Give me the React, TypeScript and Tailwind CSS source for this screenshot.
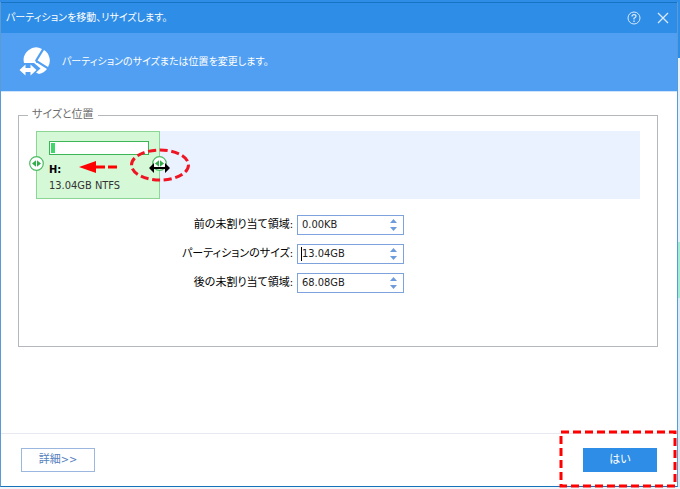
import { useState } from "react";

const rows = [
  { id: "before", label: "前の未割り当て領域:", value: "0.00KB", caret: false },
  { id: "size", label: "パーティションのサイズ:", value: "13.04GB", caret: true },
  { id: "after", label: "後の未割り当て領域:", value: "68.08GB", caret: false },
];

function PartitionIcon() {
  return (
    <svg width="31" height="30" viewBox="0 0 31 30" fill="#fff" aria-hidden="true">
      <path d="M5 16A12.500 12.500 0 0 1 23 2L16 13.500L17.500 16Z" />
      <path d="M25 3A12.500 12.500 0 0 1 29 20L18.500 13.500Z" />
      <path d="M15 16L18.500 16L28 22Q25 26 20 27L17 25.500L21.500 21.500Z" />
      <path d="M0.500 23L6.500 17.500V21H11.500V17.500L17.500 23L11.500 28.500V25H6.500V28.500Z" />
    </svg>
  );
}

function Handle() {
  return (
    <svg width="15" height="15" viewBox="0 0 15 15" aria-hidden="true">
      <circle cx="7.500" cy="7.500" r="6.800" fill="#fff" stroke="#4dbb64" strokeWidth="1.200" />
      <path d="M7 4.300V10.700L3 7.500ZM8 4.300V10.700L12 7.500Z" fill="#2fae49" />
    </svg>
  );
}

function SpinField({ id, label, value, caret }: (typeof rows)[number]) {
  const [text, setText] = useState(value);
  return (
    <>
      <label htmlFor={id} className="text-right text-black">{label}</label>
      <div className="flex h-5 border border-[#7da2dc] bg-white">
        {caret && <span className="my-0.5 -mr-1 ml-[3px] w-px bg-black" />}
        <input
          id={id}
          value={text}
          onChange={(e) => setText(e.target.value)}
          className="min-w-0 flex-1 px-1 text-[11px] leading-4 text-[#222] outline-none"
        />
        <div className="flex w-5 flex-col items-center justify-center gap-1">
          <button aria-label="増やす">
            <svg width="7" height="4" viewBox="0 0 7 4" className="block"><path d="M0 4L3.500 0L7 4Z" fill="#6e9bdc" /></svg>
          </button>
          <button aria-label="減らす">
            <svg width="7" height="4" viewBox="0 0 7 4" className="block"><path d="M0 0L3.500 4L7 0Z" fill="#6e9bdc" /></svg>
          </button>
        </div>
      </div>
    </>
  );
}

export default function App() {
  return (
    <div className="flex min-h-screen flex-col border-t-2 border-b-2 border-t-[#2e8de6] border-b-[#f1f4f8] bg-white font-['DejaVu_Sans_Condensed','Noto_Sans_CJK_JP',sans-serif] text-[11px] leading-4 [font-feature-settings:'palt']">
      <div className="flex flex-1">
        <main className="flex min-w-0 flex-1 flex-col border-r border-b border-l border-r-[#5b9bd5] border-b-[#1673b9] border-l-[#5b9bd5] bg-white">
          {/* Title bar */}
          <header className="flex h-[31px] items-center justify-between border-t border-[#1873c4] bg-[#2e8de6] pr-2 pl-[5px] text-white">
            <h1 className="text-[10px]">パーティションを移動、リサイズします。</h1>
            <div className="flex items-center gap-4">
              <button aria-label="ヘルプ">
                <svg width="14" height="14" viewBox="0 0 14 14" fill="none" stroke="#d8eafc" className="block">
                  <circle cx="7" cy="7" r="6" />
                  <path d="M5 5.500Q5 3.700 7 3.700Q9 3.700 9 5.300Q9 6.300 7 7.300V8.500M7 9.500V11" strokeWidth="1.300" />
                </svg>
              </button>
              <button aria-label="閉じる">
                <svg width="12" height="12" viewBox="0 0 12 12" stroke="#d8eafc" strokeWidth="1.300" className="block">
                  <path d="M1 1L11 11M11 1L1 11" />
                </svg>
              </button>
            </div>
          </header>
          <div className="flex h-[59px] items-center gap-3 border-b border-[#cfe3fa] bg-[#519ff2] px-[18px] text-white">
            <PartitionIcon />
            <p className="text-[10px]">パーティションのサイズまたは位置を変更します。</p>
          </div>

          {/* Size and position */}
          <div className="flex-1 pt-[15px] pr-[19px] pl-[17px]">
            <fieldset className="h-60 border border-[#b4b8bc] px-[17px]">
              <legend className="-ml-2 px-1 text-[#6e6e6e]">サイズと位置</legend>
              <div className="mt-2 bg-[#eaf2ff]">
                <div className="relative h-[68px] w-[124px] border border-[#8bd695] bg-[#d5f8d7] px-3 py-[9px] text-[#333]">
                  <div className="-mr-0.5 h-3.5 border border-[#3cb556] bg-white p-px">
                    <div className="h-full w-1 bg-[#40d66a]" />
                  </div>
                  <p className="mt-[7px] font-bold text-black">H:</p>
                  <p className="whitespace-nowrap">13.04GB NTFS</p>
                  <span className="absolute top-6 -left-2"><Handle /></span>
                  <span className="absolute top-6 -right-2"><Handle /></span>
                  <svg width="38" height="12" viewBox="0 0 38 12" className="absolute top-[29px] left-[42px]" aria-hidden="true">
                    <path d="M0 6L17 0V12Z" fill="#f00" />
                    <path d="M16 6H38" stroke="#f00" strokeWidth="3" strokeDasharray="10 3" />
                  </svg>
                  <svg width="62" height="36" viewBox="0 0 62 36" className="absolute top-4 -right-8" aria-hidden="true">
                    <ellipse cx="31" cy="17" rx="28.500" ry="15" fill="none" stroke="#f01423" strokeWidth="3" strokeDasharray="8 3.600" />
                    <path d="M20 20L25 15V19H36V15L41 20L36 25V21H25V25Z" />
                  </svg>
                </div>
              </div>
              <div className="mt-4 ml-34 grid w-[232px] grid-cols-[1fr_107px] items-center gap-x-1 gap-y-[9px]">
                {rows.map((row) => (
                  <SpinField key={row.id} {...row} />
                ))}
              </div>
            </fieldset>
          </div>

          {/* Actions */}
          <footer className="flex h-[53px] items-center justify-between border-t border-[#e8e8f0] px-5">
            <button className="h-6 w-[74px] border border-[#9bb7df] text-[#5681bd]">詳細&gt;&gt;</button>
            <div className="relative">
              <button className="h-6 w-[74px] bg-[#2e8de6] text-white">はい</button>
              <svg width="118" height="58" className="pointer-events-none absolute -top-[18px] -left-6" aria-hidden="true">
                <rect x="2" y="2" width="114" height="54" fill="none" stroke="#f00" strokeWidth="3" strokeDasharray="8 4" />
              </svg>
            </div>
          </footer>
        </main>
        {/* Sliver of the window behind */}
        <div className="flex w-0.5 flex-col">
          <div className="h-14 bg-[#2e8de6]" />
          <div className="h-46 bg-[#e6f1fa]" />
          <div className="h-14 bg-[#a5ecd4]" />
          <div className="flex-1 bg-[#d9ecf8]" />
        </div>
      </div>
    </div>
  );
}
